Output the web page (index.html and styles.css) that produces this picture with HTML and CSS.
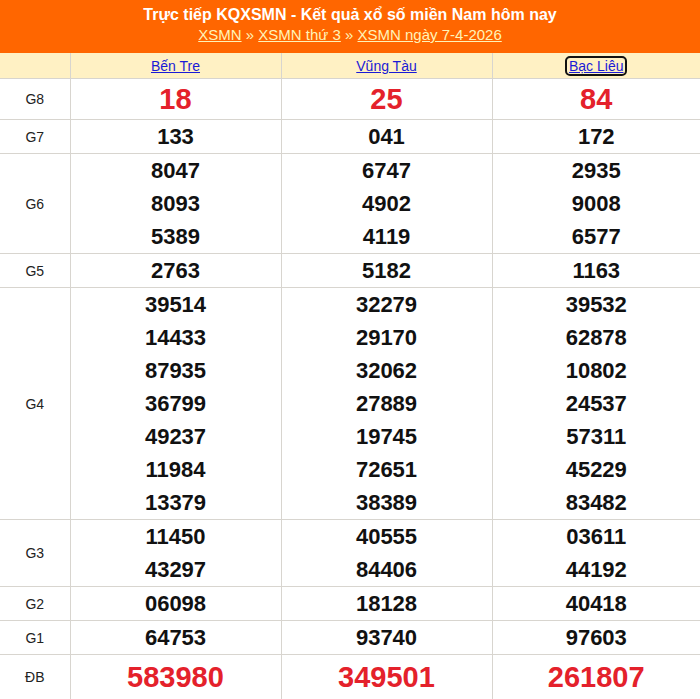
FILE: index.html
```html
<!DOCTYPE html>
<html lang="vi">
<head>
<meta charset="utf-8">
<title>KQXSMN</title>
<link rel="stylesheet" href="styles.css">
</head>
<body>
<div class="banner">
  <h1 class="title">Trực tiếp KQXSMN - Kết quả xổ số miền Nam hôm nay</h1>
  <div class="crumbs"><a href="#">XSMN</a> » <a href="#">XSMN thứ 3</a> » <a href="#">XSMN ngày 7-4-2026</a></div>
</div>
<table class="results">
  <colgroup><col class="c-label"><col class="c-prov"><col class="c-prov"><col class="c-last"></colgroup>
  <thead>
    <tr class="head"><th></th><th><a href="#">Bến Tre</a></th><th><a href="#">Vũng Tàu</a></th><th><a href="#" class="focused">Bạc Liêu</a></th></tr>
  </thead>
  <tbody>
    <tr class="g8"><td class="lbl">G8</td><td><div class="n big red">18</div></td><td><div class="n big red">25</div></td><td><div class="n big red">84</div></td></tr>
    <tr><td class="lbl">G7</td><td><div class="n">133</div></td><td><div class="n">041</div></td><td><div class="n">172</div></td></tr>
    <tr><td class="lbl">G6</td>
      <td><div class="n">8047</div><div class="n">8093</div><div class="n">5389</div></td>
      <td><div class="n">6747</div><div class="n">4902</div><div class="n">4119</div></td>
      <td><div class="n">2935</div><div class="n">9008</div><div class="n">6577</div></td></tr>
    <tr><td class="lbl">G5</td><td><div class="n">2763</div></td><td><div class="n">5182</div></td><td><div class="n">1163</div></td></tr>
    <tr><td class="lbl">G4</td>
      <td><div class="n">39514</div><div class="n">14433</div><div class="n">87935</div><div class="n">36799</div><div class="n">49237</div><div class="n">11984</div><div class="n">13379</div></td>
      <td><div class="n">32279</div><div class="n">29170</div><div class="n">32062</div><div class="n">27889</div><div class="n">19745</div><div class="n">72651</div><div class="n">38389</div></td>
      <td><div class="n">39532</div><div class="n">62878</div><div class="n">10802</div><div class="n">24537</div><div class="n">57311</div><div class="n">45229</div><div class="n">83482</div></td></tr>
    <tr><td class="lbl">G3</td>
      <td><div class="n">11450</div><div class="n">43297</div></td>
      <td><div class="n">40555</div><div class="n">84406</div></td>
      <td><div class="n">03611</div><div class="n">44192</div></td></tr>
    <tr><td class="lbl">G2</td><td><div class="n">06098</div></td><td><div class="n">18128</div></td><td><div class="n">40418</div></td></tr>
    <tr><td class="lbl">G1</td><td><div class="n">64753</div></td><td><div class="n">93740</div></td><td><div class="n">97603</div></td></tr>
    <tr class="db"><td class="lbl">ĐB</td><td><div class="n big red">583980</div></td><td><div class="n big red">349501</div></td><td><div class="n big red">261807</div></td></tr>
  </tbody>
</table>
</body>
</html>
```
FILE: styles.css
```css
html, body {
  margin: 0;
  padding: 0;
  background: #fff;
  font-family: "Liberation Sans", Arial, sans-serif;
}
.banner {
  background: #ff6600;
  height: 53px;
  box-sizing: border-box;
  padding-top: 5px;
  text-align: center;
}
.title {
  margin: 0;
  color: #fff;
  font-size: 16px;
  font-weight: bold;
  line-height: 20px;
}
.crumbs {
  color: #fff3b8;
  font-size: 15px;
  line-height: 20px;
}
.crumbs a {
  color: #fff3b8;
  text-decoration: underline;
}
.results {
  width: 700px;
  border-collapse: collapse;
  table-layout: fixed;
}
.c-label { width: 70px; }
.c-prov { width: 211px; }
.c-last { width: 208px; }
.results th, .results td {
  border: 1px solid #d8d5cf;
  text-align: center;
  padding: 0;
}
.results tr:first-child th { border-top: none; }
.results tr th:first-child, .results tr td:first-child { border-left: none; }
.results tr th:last-child, .results tr td:last-child { border-right: none; }
.head th {
  background: #fff1c4;
  height: 25px;
  font-weight: normal;
  font-size: 14px;
}
.head a {
  color: #1a1ad6;
  text-decoration: underline;
  padding: 0 2px;
}
.head a.focused {
  outline: 2px solid #111;
  border-radius: 3px;
}
.lbl {
  font-size: 14px;
  color: #222;
}
.n {
  font-size: 22px;
  font-weight: bold;
  line-height: 33px;
  color: #111;
}
.n.big {
  font-size: 29px;
  line-height: 40px;
}
.red { color: #e4212b !important; }
.db .n.big { line-height: 44px; }
```
